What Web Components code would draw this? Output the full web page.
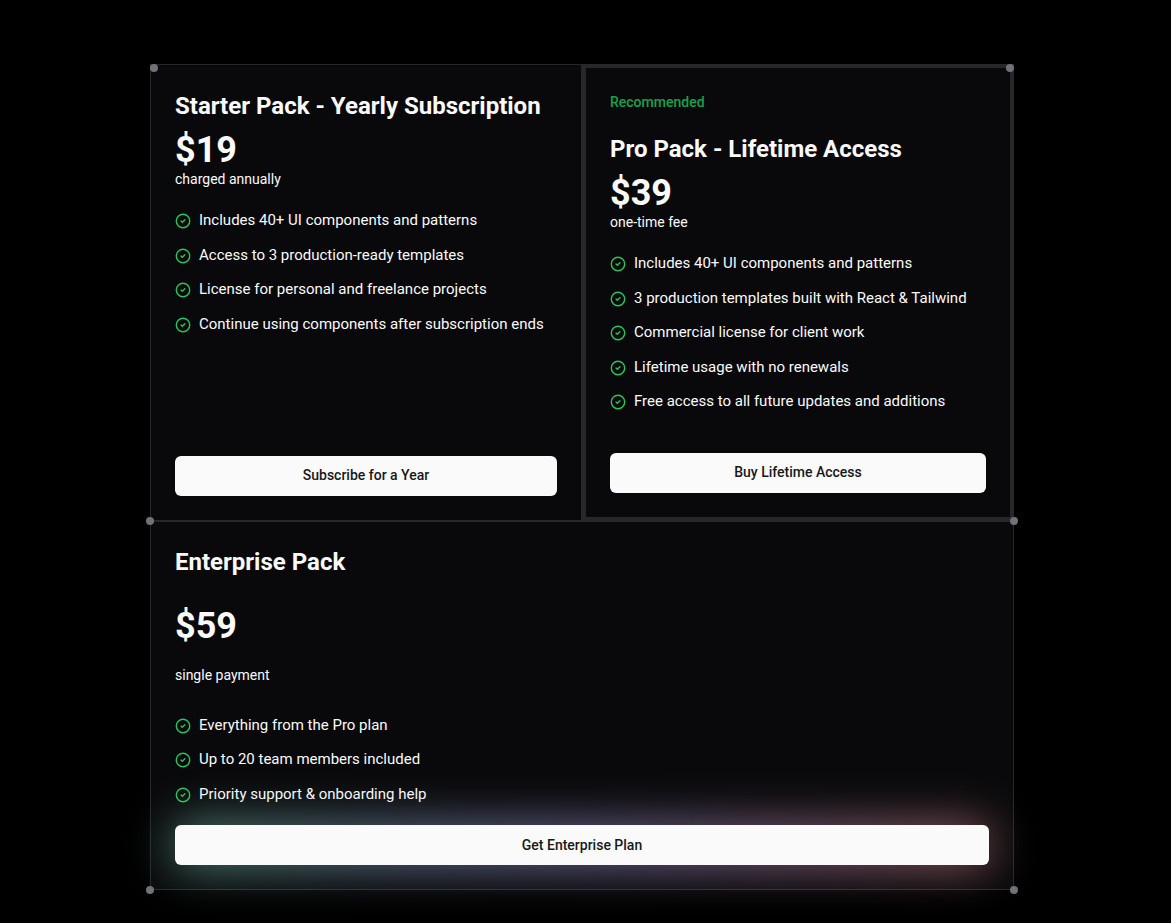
<!DOCTYPE html>
<html lang="en">
<head>
<meta charset="utf-8">
<meta name="viewport" content="width=device-width, initial-scale=1">
<title>Pricing</title>
<style>
  body { margin: 0; background: #000; color: #fafafa; font-family: Roboto, "Liberation Sans", sans-serif; -webkit-font-smoothing: antialiased; }
</style>
</head>
<body>
<pricing-grid>
  <pricing-card name="Starter Pack - Yearly Subscription" price="$19" note="charged annually" action="Subscribe for a Year" corners="top-left">
    <check-item>Includes 40+ UI components and patterns</check-item>
    <check-item>Access to 3 production-ready templates</check-item>
    <check-item>License for personal and freelance projects</check-item>
    <check-item>Continue using components after subscription ends</check-item>
  </pricing-card>
  <pricing-card featured name="Pro Pack - Lifetime Access" price="$39" note="one-time fee" action="Buy Lifetime Access" corners="top-right">
    <span slot="badge">Recommended</span>
    <check-item>Includes 40+ UI components and patterns</check-item>
    <check-item>3 production templates built with React &amp; Tailwind</check-item>
    <check-item>Commercial license for client work</check-item>
    <check-item>Lifetime usage with no renewals</check-item>
    <check-item>Free access to all future updates and additions</check-item>
  </pricing-card>
  <pricing-card wide name="Enterprise Pack" price="$59" note="single payment" action="Get Enterprise Plan" corners="outer">
    <check-item>Everything from the Pro plan</check-item>
    <check-item>Up to 20 team members included</check-item>
    <check-item>Priority support &amp; onboarding help</check-item>
  </pricing-card>
</pricing-grid>

<template id="grid-template">
  <style>
    :host { display: block; padding: 64px 31px 32px 24px; }
    main { display: grid; grid-template-columns: 1fr 1fr; max-width: 864px; margin: 0 auto; }
    @media (max-width: 760px) { main { grid-template-columns: 1fr; } }
  </style>
  <main><slot></slot></main>
</template>

<template id="item-template">
  <style>
    :host { display: flex; align-items: center; gap: 8px; font-size: 15px; line-height: 1.5; }
    svg { flex: none; width: 16px; height: 16px; margin-top: 2px; color: #22c55e; }
  </style>
  <svg viewBox="0 0 16 16" fill="none" stroke="currentColor" stroke-width="1.4" stroke-linecap="round" stroke-linejoin="round" aria-hidden="true">
    <circle cx="8" cy="8" r="6.7"/>
    <path d="M6 8.1l1.3 1.2 2.6-2.5"/>
  </svg>
  <span><slot></slot></span>
</template>

<template id="card-template">
  <style>
    :host { display: flex; position: relative; box-sizing: border-box; flex-direction: column; padding: 24px; border: 1px solid #27272a; background: #09090b; }
    :host([featured]) { border-width: 4px; }
    :host([wide]) { grid-column: 1 / -1; }
    .badge { display: none; margin-bottom: 20px; color: #16a34a; font-size: 14px; font-weight: 500; line-height: 20px; }
    :host([featured]) .badge { display: block; }
    h2, p { margin: 0; }
    h2 { font-size: 24px; font-weight: 700; line-height: 34px; }
    .price { margin-top: 8px; font-size: 36px; font-weight: 700; line-height: 38px; }
    .note { font-size: 14px; line-height: 20px; }
    .list { display: flex; flex-direction: column; gap: 12px; margin: 20px 0 40px; }
    .action { position: relative; margin-top: auto; }
    button { position: relative; display: block; width: 100%; height: 40px; padding: 0 16px 2px; border: 0; border-radius: 6px; background: #fafafa; color: #18181b; font: inherit; font-size: 14px; font-weight: 500; cursor: pointer; }
    :host([wide]) h2 { line-height: 32px; }
    :host([wide]) .price { margin-top: 28px; line-height: 40px; }
    :host([wide]) .note { margin-top: 19px; }
    :host([wide]) .list { margin: 29px 0 20px; }
    :host([wide]) button { padding-bottom: 0; }
    :host([wide]) .action::before { content: ""; position: absolute; inset: 0; background: linear-gradient(90deg, #8ceccc, #a0c4e8, #bcb4fa, #dca4d4, #f89ca0); filter: blur(24px); opacity: .6; }
    .dot { display: none; position: absolute; width: 8px; height: 8px; border-radius: 50%; background: #71717a; }
    :host([corners="top-left"]) .tl { display: block; top: -1px; left: -1px; }
    :host([corners="top-right"]) .tr { display: block; top: -4px; right: -4px; }
    :host([corners="outer"]) .dot { display: block; }
    :host([corners="outer"]) .tl { top: -5px; left: -5px; }
    :host([corners="outer"]) .tr { top: -5px; right: -5px; }
    .bl { bottom: -5px; left: -5px; }
    .br { bottom: -5px; right: -5px; }
  </style>
  <div class="badge"><slot name="badge"></slot></div>
  <h2></h2>
  <p class="price"></p>
  <p class="note"></p>
  <div class="list" role="list"><slot></slot></div>
  <div class="action"><button type="button"></button></div>
  <i class="dot tl"></i><i class="dot tr"></i><i class="dot bl"></i><i class="dot br"></i>
</template>

<script>
  const clone = id => document.getElementById(id).content.cloneNode(true);

  class PricingGrid extends HTMLElement {
    constructor() {
      super();
      this.attachShadow({ mode: "open" }).append(clone("grid-template"));
    }
  }

  class CheckItem extends HTMLElement {
    constructor() {
      super();
      this.attachShadow({ mode: "open" }).append(clone("item-template"));
    }
    connectedCallback() {
      this.setAttribute("role", "listitem");
    }
  }

  class PricingCard extends HTMLElement {
    constructor() {
      super();
      this.attachShadow({ mode: "open" }).append(clone("card-template"));
    }
    connectedCallback() {
      const set = (selector, name) => {
        this.shadowRoot.querySelector(selector).textContent = this.getAttribute(name);
      };
      set("h2", "name");
      set(".price", "price");
      set(".note", "note");
      set("button", "action");
    }
  }

  customElements.define("pricing-grid", PricingGrid);
  customElements.define("check-item", CheckItem);
  customElements.define("pricing-card", PricingCard);
</script>
</body>
</html>
